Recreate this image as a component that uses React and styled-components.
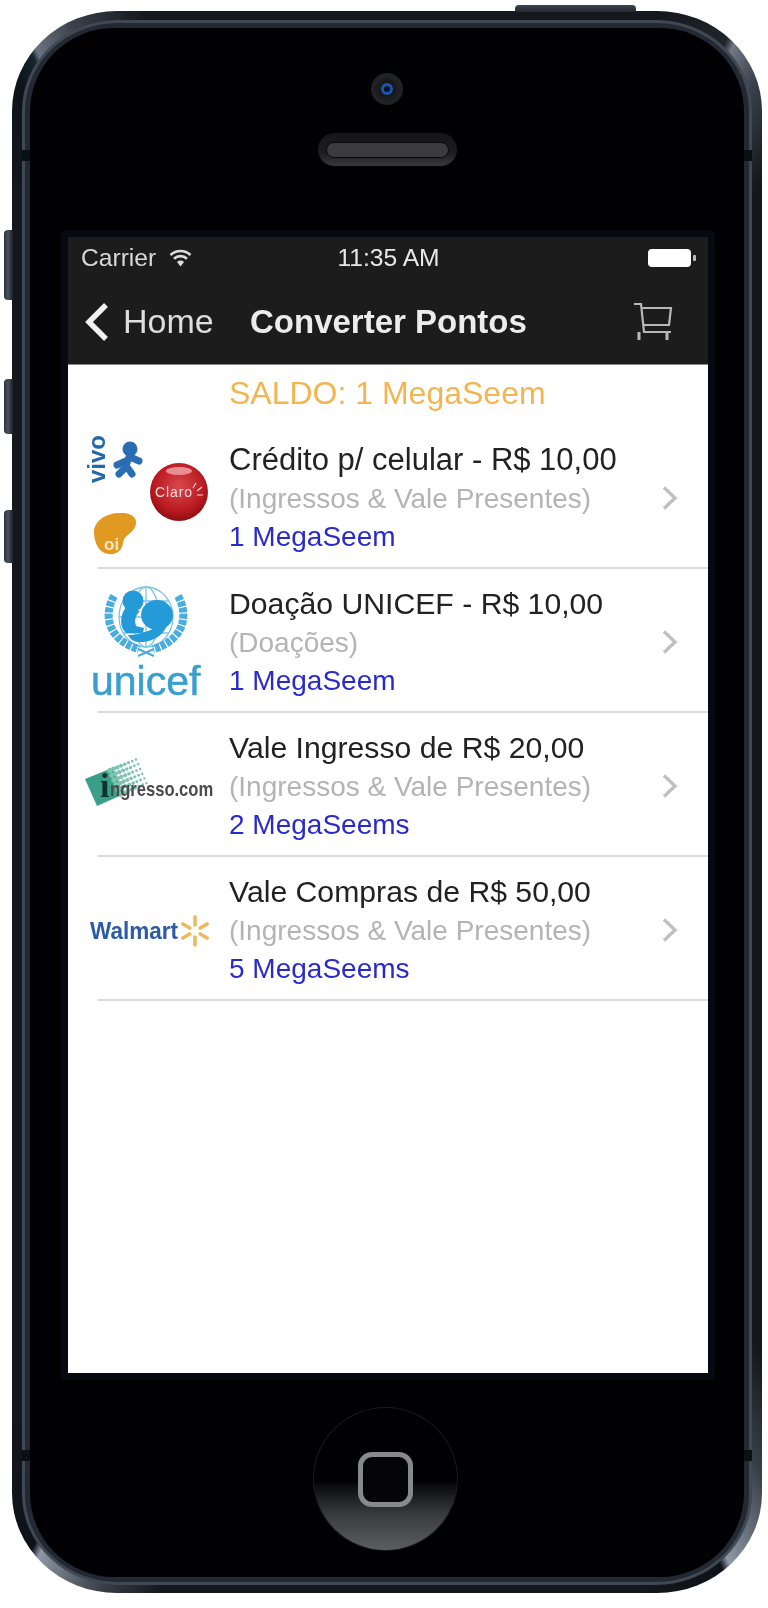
import React from 'react';
import styled, { createGlobalStyle } from 'styled-components';

const GlobalStyle = createGlobalStyle`
    html, body {
        margin: 0;
        padding: 0;
        background: #fff;
    }
    body {
        font-family: "Liberation Sans", Arial, sans-serif;
    }
`
const Page = styled.div`
    width: 768px;
    height: 1608px;
    padding: 11px 0 0 12px;
    box-sizing: border-box;
`
const Phone = styled.div`
    position: relative;
    width: 750px;
    height: 1582px;
    box-sizing: border-box;
    padding: 9px 10px 8px 10px;
    border-radius: 105px / 100px;
    background: conic-gradient(
        #14171c 0deg, #14171c 19deg, #20252c 24deg, #6f7885 24.6deg, #3a414b 27deg, #14171c 31deg,
        #14171c 146deg, #39404a 151deg, #8e97a4 155.8deg, #0c1218 156.4deg, #14171c 162deg,
        #14171c 196deg, #39404a 200deg, #8e97a4 204.8deg, #0c1218 205.4deg, #14171c 211deg,
        #14171c 329deg, #0b141a 333deg, #16252e 334.6deg, #6a7380 335deg, #3a414b 338deg, #14171c 343deg
    );
`
const Ring = styled.div`
    height: 100%;
    box-sizing: border-box;
    padding: 3px;
    border-radius: 96px / 91px;
    background: #3f4853;
`
const RingInner = styled.div`
    height: 100%;
    box-sizing: border-box;
    padding: 5px;
    border-radius: 93px / 88px;
    background: #222932;
`
const Face = styled.div`
    height: 100%;
    display: flex;
    flex-direction: column;
    align-items: center;
    border-radius: 84px / 84px;
    background: #010104;
`
const SideButton = styled.div`
    position: absolute;
    left: -8px;
    top: ${props => props.top}px;
    width: 9px;
    height: ${props => props.length}px;
    border-radius: 4px 0 0 4px;
    background: linear-gradient(90deg, #2b313a, #4a525e 45%, #1b2027);
`
const TopButton = styled.div`
    position: absolute;
    top: -6px;
    left: 503px;
    width: 121px;
    height: 7px;
    border-radius: 4px 4px 0 0;
    background: linear-gradient(180deg, #3a424e, #232932);
`
const Seam = styled.div`
    position: absolute;
    top: ${props => props.top}px;
    ${props => props.right ? 'right: 10px;' : 'left: 10px;'}
    width: 8px;
    height: 11px;
    background: #0b1015;
`
const Camera = styled.div`
    margin-top: 45px;
    width: 32px;
    height: 32px;
    border-radius: 50%;
    background: radial-gradient(circle, #16171a 30%, #222327 62%, #101114 100%);
    display: flex;
    align-items: center;
    justify-content: center;
`
const Lens = styled.div`
    width: 6px;
    height: 6px;
    border-radius: 50%;
    background: #071226;
    border: 3.5px solid #1c55ad;
`
const Speaker = styled.div`
    margin-top: 28px;
    width: 139px;
    height: 33px;
    box-sizing: border-box;
    padding: 9px 8px 8px;
    border-radius: 17px;
    background: linear-gradient(180deg, #151517 0%, #1d1d20 60%, #3a3a3e 100%);
`
const SpeakerMesh = styled.div`
    height: 100%;
    border-radius: 8px;
    border: 1px solid #0a0a0c;
    box-sizing: border-box;
    background: #3c3c3e;
`
const Bezel = styled.div`
    margin: 64px 0 0 2px;
    padding: 7px;
    background: #060910;
    border-radius: 4px;
`
const Screen = styled.div`
    width: 640px;
    height: 1136px;
    background: #fff;
    display: flex;
    flex-direction: column;
    overflow: hidden;
`
const TopBar = styled.div`
    height: 128px;
    flex: none;
    background: #1c1c1c;
    border-bottom: 1px solid #8a8a8a;
    box-sizing: border-box;
    filter: blur(0.7px);
`
const StatusBar = styled.div`
    height: 40px;
    display: grid;
    grid-template-columns: 1fr auto 1fr;
    align-items: center;
    padding: 1px 12px 0 13px;
    color: #d8d8d8;
    font-size: 24.6px;
`
const StatusLeft = styled.div`
    display: flex;
    align-items: center;
    gap: 13px;
`
const StatusRight = styled.div`
    display: flex;
    justify-content: flex-end;
`
const Clock = styled.div`
    color: #e8e8e8;
`
const NavBar = styled.div`
    height: 87px;
    display: flex;
    align-items: center;
    padding: 0 35px 0 16px;
    color: #ececec;
`
const BackLink = styled.div`
    display: flex;
    align-items: center;
    gap: 13px;
    font-size: 34px;
    color: #dedede;
    width: 166px;
    flex: none;
`
const NavTitle = styled.div`
    flex: 1;
    font-size: 33px;
    font-weight: bold;
    color: #ececec;
`
const Balance = styled.div`
    height: 60px;
    flex: none;
    box-sizing: border-box;
    padding: 10px 0 0 161px;
    font-size: 32px;
    color: #f2b552;
    filter: blur(0.7px);
`
const Rows = styled.div`
    display: flex;
    flex-direction: column;
    filter: blur(0.7px);
`
const Row = styled.div`
    position: relative;
    height: 144px;
    box-sizing: border-box;
    display: flex;
    align-items: center;
    padding-right: 30px;
    &::after {
        content: "";
        position: absolute;
        left: 30px;
        right: 0;
        bottom: 0;
        height: 2px;
        background: #dcdcdc;
    }
`
const LogoBox = styled.svg`
    width: 152px;
    height: 144px;
    flex: none;
`
const RowText = styled.div`
    flex: 1;
    margin: 2px 0 0 9px;
    display: flex;
    flex-direction: column;
`
const RowTitle = styled.div`
    font-size: ${props => props.size}px;
    line-height: 39px;
    padding-bottom: 1px;
    color: #222;
`
const RowCategory = styled.div`
    font-size: 28px;
    line-height: 38px;
    color: #b4b4b4;
`
const RowPrice = styled.div`
    font-size: 28px;
    line-height: 38px;
    color: #2a2acb;
`
const ChevronIcon = styled.svg`
    width: 16px;
    height: 24px;
    margin-top: 2px;
    flex: none;
`

const WifiIcon = () => (
    <svg width="23" height="18" viewBox="0 0 23 18">
        <path d="M1.5 6 a14.5 14.5 0 0 1 20 0" fill="none" stroke="#ddd" strokeWidth="2.6" />
        <path d="M5 9.7 a9.5 9.5 0 0 1 13 0" fill="none" stroke="#ddd" strokeWidth="2.6" />
        <path d="M8 13 a5 5 0 0 1 7 0 L11.5 17.5z" fill="#ddd" />
    </svg>
)
const BatteryIcon = () => (
    <svg width="48" height="18" viewBox="0 0 48 18">
        <rect x="0" y="0" width="43" height="18" rx="4" fill="#fff" />
        <rect x="45" y="6" width="3" height="6" rx="1" fill="#bbb" />
    </svg>
)
const BackIcon = () => (
    <svg width="26" height="40" viewBox="0 0 26 40">
        <path d="M22 3 L5 20 L22 37" fill="none" stroke="#f2f2f2" strokeWidth="5.5" />
    </svg>
)
const CartIcon = () => (
    <svg width="40" height="40" viewBox="0 0 40 40" fill="none" stroke="#b8b8b8" strokeWidth="2.2">
        <path d="M1 2 H8 L11 30 H38" />
        <path d="M9 6 H38 L36 23 H10.5" />
        <path d="M6 30 V38 M34 30 V38" strokeWidth="3" />
    </svg>
)
const Chevron = () => (
    <ChevronIcon viewBox="0 0 16 24">
        <path d="M2 1.5 L13 12 L2 22.5" fill="none" stroke="#c0c0c0" strokeWidth="3.4" />
    </ChevronIcon>
)

const OperatorsLogo = () => (
    <LogoBox viewBox="0 0 152 144">
        <defs>
            <radialGradient id="claroBall" cx="50%" cy="40%" r="60%">
                <stop offset="0%" stopColor="#d8484e" />
                <stop offset="70%" stopColor="#bb1b22" />
                <stop offset="100%" stopColor="#8e0d12" />
            </radialGradient>
        </defs>
        <text transform="translate(37 58) rotate(-90)" fontFamily="Liberation Sans" fontWeight="bold" fontSize="24" fill="#2468a8" textLength="48">vivo</text>
        <circle cx="62" cy="24" r="7.5" fill="#2a6db3" />
        <g stroke="#2a6db3" strokeWidth="7" strokeLinecap="round" fill="none">
            <path d="M62 29 L58 41" />
            <path d="M62 32 L71 36" />
            <path d="M58 36 L49 40" />
            <path d="M58 42 L51 49" />
            <path d="M59 42 L64 49" />
        </g>
        <circle cx="111" cy="67" r="29" fill="url(#claroBall)" />
        <ellipse cx="111" cy="46" rx="13" ry="4" fill="#e98f92" />
        <text x="87" y="72" fontFamily="Liberation Sans" fontSize="14" fill="#f9dcde" textLength="37">Claro</text>
        <path d="M125 63 L128 58 M129 66 L134 62 M129 70 L135 70" stroke="#f6d6d8" strokeWidth="1.2" />
        <path d="M26 109 C25 96 38 88 52 88 C64 87 71 94 67 102 C63 110 56 110 55 118 C54 126 48 130 40 129 C32 128 27 120 26 109z" fill="#e09a22" />
        <text x="36" y="125" fontFamily="Liberation Sans" fontSize="17" fontWeight="bold" fill="#f8e7c2">oi</text>
    </LogoBox>
)
const UnicefLogo = () => (
    <LogoBox viewBox="0 0 152 144">
        <g fill="none" stroke="#7cc4e8" strokeWidth="1.3">
            <ellipse cx="78" cy="48" rx="27" ry="30" />
            <ellipse cx="78" cy="48" rx="13" ry="30" />
            <path d="M51 48 H105 M55 32 H101 M55 64 H101 M78 18 V78" />
        </g>
        <g fill="none" stroke="#49addf" strokeWidth="8" strokeDasharray="5 1.2">
            <path d="M46 27 C34 48 42 72 71 80" />
            <path d="M110 27 C122 48 114 72 85 80" />
        </g>
        <path d="M70 87 L86 80 M86 87 L70 80" stroke="#49addf" strokeWidth="2" />
        <g fill="#259ad8">
            <circle cx="65" cy="32" r="10.5" />
            <path d="M58 38 C52 46 51 58 58 64 L75 64 L76 59 L68 57 C66 50 68 46 72 42z" />
            <ellipse cx="89" cy="46" rx="16" ry="15" />
            <path d="M60 66 C74 66 86 60 100 52 C98 66 84 74 70 73 C66 73 62 70 60 66z" />
        </g>
        <text x="23" y="126" fontFamily="Liberation Sans" fontSize="41" fill="#3a9fd0" stroke="#3a9fd0" strokeWidth="0.5">unicef</text>
    </LogoBox>
)

// meio-tom do logo da ingresso, em coordenadas do paralelogramo
const halftone = [];
for (let i = 0; i < 8; i++) {
    for (let j = 0; j < 6; j++) {
        const u = 0.48 + i * 0.075;
        const v = 0.06 + j * 0.175;
        halftone.push({ cx: 17 + 50 * u + 12 * v, cy: 66 - 21 * u + 27 * v, r: 2.6 - i * 0.2 });
    }
}
const IngressoLogo = () => (
    <LogoBox viewBox="0 0 152 144">
        <path d="M17 66 L44 55 L56 81 L29 93z" fill="#3a9f89" />
        <g fill="#7dc3b2">
            {halftone.map(({ cx, cy, r }) => <circle key={`${cx}-${cy}`} cx={cx} cy={cy} r={r} />)}
        </g>
        <text x="32" y="84" fontFamily="Liberation Serif" fontSize="34" fontWeight="bold" fill="#14302b">i</text>
        <text transform="translate(42 83) scale(0.83 1)" fontFamily="Liberation Sans" fontSize="20" fontWeight="bold" fill="#4a4a4a">ngresso.com</text>
    </LogoBox>
)
const WalmartLogo = () => (
    <LogoBox viewBox="0 0 152 144">
        <text x="22" y="82" fontFamily="Liberation Sans" fontSize="24" fontWeight="bold" fill="#2d5aa6" textLength="88" lengthAdjust="spacingAndGlyphs">Walmart</text>
        <g stroke="#ecb95e" strokeWidth="3.6" strokeLinecap="round">
            {[0, 60, 120, 180, 240, 300].map(a => (
                <line key={a} x1="127" y1="68" x2="127" y2="60" transform={`rotate(${a} 127 74)`} />
            ))}
        </g>
    </LogoBox>
)

const items = [
    { id: 1, title: 'Crédito p/ celular - R$ 10,00', titleSize: 31, category: '(Ingressos & Vale Presentes)', price: '1 MegaSeem', Logo: OperatorsLogo },
    { id: 2, title: 'Doação UNICEF - R$ 10,00', titleSize: 30.2, category: '(Doações)', price: '1 MegaSeem', Logo: UnicefLogo },
    { id: 3, title: 'Vale Ingresso de R$ 20,00', titleSize: 30.2, category: '(Ingressos & Vale Presentes)', price: '2 MegaSeems', Logo: IngressoLogo },
    { id: 4, title: 'Vale Compras de R$ 50,00', titleSize: 30.2, category: '(Ingressos & Vale Presentes)', price: '5 MegaSeems', Logo: WalmartLogo },
];

const HomeButton = styled.div`
    margin: 27px 3px 0 0;
    width: 145px;
    height: 144px;
    border-radius: 50%;
    border: 1px solid #1a1b1e;
    box-sizing: border-box;
    background: linear-gradient(180deg, #010104 52%, #0a0a0d 54%, #3a3b3f 75%, #5c5d61 100%);
    display: flex;
    align-items: center;
    justify-content: center;
`
const HomeSquare = styled.div`
    width: 55px;
    height: 55px;
    box-sizing: border-box;
    border: 5px solid #88898d;
    border-radius: 14px;
    background: #050507;
`

const App = () => {
    return (
        <Page>
            <GlobalStyle />
            <Phone>
                <TopButton />
                <SideButton top={219} length={70} />
                <SideButton top={368} length={55} />
                <SideButton top={499} length={53} />
                <Ring>
                    <RingInner>
                        <Face>
                            <Camera><Lens /></Camera>
                            <Speaker><SpeakerMesh /></Speaker>
                            <Bezel>
                                <Screen>
                                    <TopBar>
                                        <StatusBar>
                                            <StatusLeft>Carrier <WifiIcon /></StatusLeft>
                                            <Clock>11:35 AM</Clock>
                                            <StatusRight><BatteryIcon /></StatusRight>
                                        </StatusBar>
                                        <NavBar>
                                            <BackLink><BackIcon />Home</BackLink>
                                            <NavTitle>Converter Pontos</NavTitle>
                                            <CartIcon />
                                        </NavBar>
                                    </TopBar>
                                    <Balance>SALDO: 1 MegaSeem</Balance>
                                    <Rows>
                                        {items.map(({ id, title, titleSize, category, price, Logo }) => (
                                            <Row key={id}>
                                                <Logo />
                                                <RowText>
                                                    <RowTitle size={titleSize}>{title}</RowTitle>
                                                    <RowCategory>{category}</RowCategory>
                                                    <RowPrice>{price}</RowPrice>
                                                </RowText>
                                                <Chevron />
                                            </Row>
                                        ))}
                                    </Rows>
                                </Screen>
                            </Bezel>
                            <HomeButton><HomeSquare /></HomeButton>
                        </Face>
                    </RingInner>
                </Ring>
                <Seam top={139} />
                <Seam top={139} right />
                <Seam top={1439} />
                <Seam top={1439} right />
            </Phone>
        </Page>
    )
}

export default App;
